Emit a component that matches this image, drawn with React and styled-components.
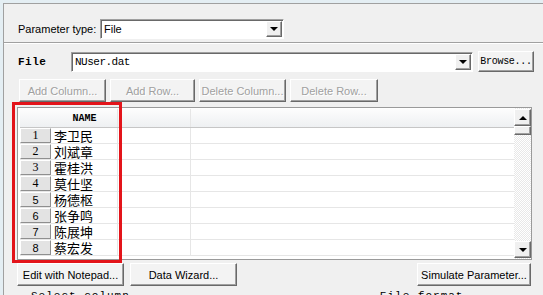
import React from "react";
import styled, { createGlobalStyle, css } from "styled-components";

const GlobalStyle = createGlobalStyle`
  html, body {
    margin: 0;
    padding: 0;
    background: #e4eef3;
    overflow: hidden;
  }
  body {
    font-family: "Liberation Sans", Arial, sans-serif;
    font-size: 11px;
    color: #000;
  }
`;

const names = ["李卫民", "刘斌章", "霍桂洪", "莫仕坚", "杨德枢", "张争鸣", "陈展坤", "蔡宏发"];

const sans = '"Liberation Sans", Arial, sans-serif';
const mono = '"Liberation Mono", "DejaVu Sans Mono", monospace';

const raised = css`
  border: 1px solid;
  border-color: #fff #696969 #696969 #fff;
  box-shadow: inset -1px -1px #a0a0a0;
`;

const sunken = css`
  border: 1px solid;
  border-color: #a0a0a0 #fff #fff #a0a0a0;
  box-shadow: inset 1px 1px #696969;
`;

const Frame = styled.div`
  margin: 3px 0 0 3px;
  height: 292px;
  border-top: 1px solid #a0a0a0;
  border-left: 1px solid #a0a0a0;
  background: #f0f0f0;
  display: flex;
  flex-direction: column;
  overflow: hidden;
`;

const TopBar = styled.div`
  flex: none;
  height: 39px;
  display: flex;
  align-items: flex-end;
  padding: 0 0 3px 14px;
  box-sizing: border-box;
  border-bottom: 1px solid #a0a0a0;
  box-shadow: 0 1px #fff;
`;

const Label = styled.span`
  width: ${({ w }) => w}px;
  flex: none;
  white-space: nowrap;
  font-family: ${({ mono: m }) => (m ? mono : sans)};
  font-weight: ${({ mono: m }) => (m ? "bold" : "normal")};
  font-size: 11px;
  line-height: 20px;
  letter-spacing: ${({ mono: m }) => (m ? "0.5px" : "0")};
`;

const Combo = styled.div`
  ${sunken};
  box-sizing: border-box;
  width: ${({ w }) => w}px;
  flex: none;
  height: 20px;
  background: #fff;
  display: flex;
  align-items: center;
  padding-left: 3px;
  white-space: nowrap;
  font-family: ${({ mono: m }) => (m ? mono : sans)};
  font-size: 11px;
  letter-spacing: ${({ mono: m }) => (m ? "-0.5px" : "0")};
`;

const ComboText = styled.span`
  flex: 1;
`;

const ArrowBtn = styled.div`
  ${raised};
  box-sizing: border-box;
  width: 16px;
  height: 16px;
  margin-right: 1px;
  background: #f0f0f0;
  display: flex;
  align-items: center;
  justify-content: center;
  flex: none;
`;

const Triangle = styled.span`
  width: 0;
  height: 0;
  border-left: 4px solid transparent;
  border-right: 4px solid transparent;
  ${({ up }) => (up ? "border-bottom: 4px solid #000;" : "border-top: 4px solid #000;")}
`;

const Body = styled.div`
  flex: none;
  display: flex;
  flex-direction: column;
  padding: 8px 0 0 13px;
`;

const Row = styled.div`
  display: flex;
  align-items: center;
  gap: ${({ gap }) => gap || 0}px;
  margin: ${({ m }) => m || "0"};
`;

const Button = styled.button`
  ${raised};
  box-sizing: border-box;
  flex: none;
  width: ${({ w }) => w}px;
  height: ${({ h }) => h || 23}px;
  padding: 0;
  white-space: nowrap;
  background: #f3f3f3;
  font-family: ${({ mono: m }) => (m ? mono : sans)};
  font-size: ${({ mono: m }) => (m ? "10px" : "11px")};
  color: ${({ disabled }) => (disabled ? "#a0a0a0" : "#000")};
  text-shadow: ${({ disabled }) => (disabled ? "1px 1px #fff" : "none")};
  letter-spacing: ${({ mono: m }) => (m ? "-0.3px" : "0")};
`;

const GridWrap = styled.div`
  position: relative;
  flex: none;
  width: 515px;
  height: 153px;
  margin-top: 5px;
`;

const Grid = styled.div`
  box-sizing: border-box;
  width: 100%;
  height: 100%;
  border: 1px solid #9a9a9a;
  background: #fff;
  display: flex;
`;

const Sheet = styled.div`
  flex: 1;
  padding: 1px 0 0 2px;
  display: flex;
  flex-direction: column;
`;

const HeadRow = styled.div`
  display: flex;
  flex: none;
  height: 18px;
  background: linear-gradient(#fdfdfd, #eef0f2);
  border-bottom: 1px solid #c6c6c6;
`;

const Cell = styled.div`
  box-sizing: border-box;
  width: ${({ w }) => (w ? `${w}px` : "auto")};
  flex: ${({ w }) => (w ? "none" : "1")};
  border-right: ${({ line }) => (line ? "1px solid #e6e6e6" : "none")};
  display: flex;
  align-items: center;
  justify-content: ${({ center }) => (center ? "center" : "flex-start")};
`;

const HeadText = styled.span`
  font-family: ${mono};
  font-weight: bold;
  font-size: 10px;
`;

const DataRow = styled.div`
  display: flex;
  flex: none;
  height: 16px;
  border-bottom: 1px solid #e6e6e6;
  box-sizing: border-box;
`;

const RowHead = styled.div`
  box-sizing: border-box;
  width: 31px;
  height: 15px;
  flex: none;
  background: #e3e3e3;
  border: 1px solid;
  border-color: #fff #8f8f8f #8f8f8f #fff;
  display: flex;
  align-items: center;
  justify-content: center;
  font-family: ${({ serif }) => (serif ? '"Liberation Serif", "Times New Roman", serif' : sans)};
  font-size: ${({ serif }) => (serif ? "12px" : "11px")};
  margin-right: 1px;
`;

const Name = styled.span`
  font-family: "Noto Sans CJK SC", sans-serif;
  font-size: 13px;
  line-height: 15px;
  padding-left: 2px;
  white-space: nowrap;
`;

const Scrollbar = styled.div`
  width: 17px;
  flex: none;
  display: flex;
  flex-direction: column;
  padding: 1px 0 1px;
  background-color: #fff;
  background-image: repeating-conic-gradient(#e8e8e8 0 25%, #fff 0 50%);
  background-size: 2px 2px;
`;

const ScrollBtn = styled.div`
  ${raised};
  box-sizing: border-box;
  width: 17px;
  height: 17px;
  background: #f0f0f0;
  display: flex;
  align-items: center;
  justify-content: center;
`;

const Thumb = styled.div`
  ${raised};
  box-sizing: border-box;
  width: 17px;
  height: 9px;
  background: #f0f0f0;
`;

const Track = styled.div`
  flex: 1;
`;

const Marker = styled.div`
  position: absolute;
  left: -5px;
  top: -5px;
  width: 110px;
  height: 161px;
  box-sizing: border-box;
  border: 3px solid #e3141a;
  pointer-events: none;
`;

const Footer = styled.div`
  display: flex;
  flex: none;
  gap: 6px;
  margin-top: 3px;
  width: 514px;
`;

const Spacer = styled.div`
  flex: 1;
`;

const CutText = styled.div`
  display: flex;
  flex: none;
  margin-top: 3px;
  white-space: nowrap;
  font-family: ${mono};
  font-size: 11px;
  line-height: 14px;
`;

const Caption = styled.span`
  margin-left: ${({ ml }) => ml}px;
  letter-spacing: 1px;
`;

export default function App() {
  return (
    <>
      <GlobalStyle />
      <Frame>
        <TopBar>
          <Label w={82}>Parameter type:</Label>
          <Combo w={184}>
            <ComboText>File</ComboText>
            <ArrowBtn>
              <Triangle />
            </ArrowBtn>
          </Combo>
        </TopBar>
        <Body>
          <Row gap={5}>
            <Label w={48} mono style={{ marginLeft: 1 }}>
              File
            </Label>
            <Combo w={402} mono>
              <ComboText>NUser.dat</ComboText>
              <ArrowBtn>
                <Triangle />
              </ArrowBtn>
            </Combo>
            <Button w={56} h={21} mono>
              Browse...
            </Button>
          </Row>
          <Row gap={4} m="7px 0 0 2px">
            <Button w={87} disabled>Add Column...</Button>
            <Button w={85} disabled>Add Row...</Button>
            <Button w={87} disabled>Delete Column...</Button>
            <Button w={88} disabled>Delete Row...</Button>
          </Row>
          <GridWrap>
            <Grid>
              <Sheet>
                <HeadRow>
                  <Cell w={32} />
                  <Cell w={66} center line>
                    <HeadText>NAME</HeadText>
                  </Cell>
                  <Cell w={73} line />
                  <Cell />
                </HeadRow>
                {names.map((n, i) => (
                  <DataRow key={n}>
                    <RowHead serif={i < 4}>{i + 1}</RowHead>
                    <Cell w={66} line>
                      <Name>{n}</Name>
                    </Cell>
                    <Cell w={73} line />
                    <Cell />
                  </DataRow>
                ))}
              </Sheet>
              <Scrollbar>
                <ScrollBtn>
                  <Triangle up />
                </ScrollBtn>
                <Thumb />
                <Track />
                <ScrollBtn>
                  <Triangle />
                </ScrollBtn>
              </Scrollbar>
            </Grid>
            <Marker />
          </GridWrap>
          <Footer>
            <Button w={107}>Edit with Notepad...</Button>
            <Button w={107}>Data Wizard...</Button>
            <Spacer />
            <Button w={114}>Simulate Parameter...</Button>
          </Footer>
          <CutText>
            <Caption ml={14}>Select column</Caption>
            <Caption ml={250}>File format</Caption>
          </CutText>
        </Body>
      </Frame>
    </>
  );
}
